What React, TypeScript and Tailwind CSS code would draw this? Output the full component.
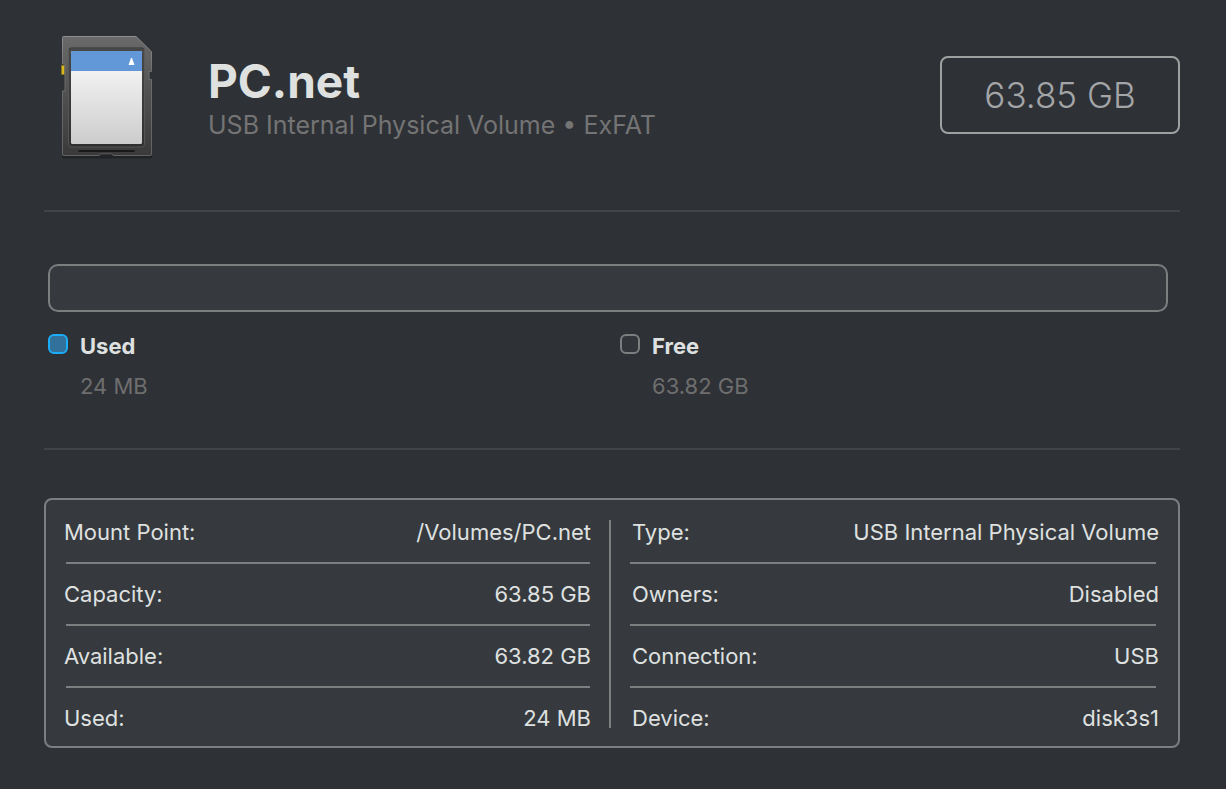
type Entry = { label: string; value: string };

const volumeDetails: Entry[] = [
  { label: "Mount Point:", value: "/Volumes/PC.net" },
  { label: "Capacity:", value: "63.85 GB" },
  { label: "Available:", value: "63.82 GB" },
  { label: "Used:", value: "24 MB" },
];

const deviceDetails: Entry[] = [
  { label: "Type:", value: "USB Internal Physical Volume" },
  { label: "Owners:", value: "Disabled" },
  { label: "Connection:", value: "USB" },
  { label: "Device:", value: "disk3s1" },
];

function SdCardIcon() {
  return (
    <svg viewBox="10 9 94 126" className="h-[126px] w-[94px] shrink-0" aria-hidden="true">
      <defs>
        <linearGradient id="body" x1="0" y1="0" x2="0" y2="1">
          <stop offset="0" stopColor="#6a6a6a" />
          <stop offset="0.45" stopColor="#525252" />
          <stop offset="1" stopColor="#3a3a3a" />
        </linearGradient>
        <linearGradient id="edge" x1="0" y1="0" x2="0" y2="1">
          <stop offset="0" stopColor="#8f8f8f" />
          <stop offset="0.3" stopColor="#6d6d6d" />
          <stop offset="1" stopColor="#626262" />
        </linearGradient>
        <linearGradient id="frame" x1="0" y1="0" x2="0" y2="1">
          <stop offset="0" stopColor="#484848" />
          <stop offset="1" stopColor="#303030" />
        </linearGradient>
        <linearGradient id="label" x1="0" y1="0" x2="0" y2="1">
          <stop offset="0" stopColor="#f2f2f2" />
          <stop offset="0.25" stopColor="#f0f0f0" />
          <stop offset="1" stopColor="#cccccc" />
        </linearGradient>
      </defs>
      <path d="M12 131h90v1q0 1.500-1.500 1.500H13.500q-1.500 0-1.500-1.500z" fill="#1d1f21" opacity="0.7" />
      <rect x="11.5" y="40.5" width="3" height="9" fill="#d8b81c" stroke="#8d7a1c" strokeWidth="0.6" />
      <path
        d="M13.500 11.500H86l15.500 15.200V46.500H99V54.500h2.500V129q0 1.500-1.500 1.500H63.500l-1.500-1.500H50.500L49 130.500H14q-1.500 0-1.500-1.500V66h2.500V39h-2.500V12.500q0-1 1-1z"
        fill="url(#body)"
        stroke="url(#edge)"
        strokeWidth="1"
      />
      <rect x="18.500" y="23.500" width="76" height="98.500" rx="3" fill="url(#frame)" stroke="#5c5c5c" strokeWidth="0.8" />
      <path d="M19 25q0-2 2-2h71q2 0 2 2" fill="none" stroke="#333333" strokeWidth="1" />
      <rect x="21" y="26" width="71" height="93" rx="1.5" fill="url(#label)" />
      <path d="M21 46V27.500q0-1.500 1.500-1.500h68q1.500 0 1.500 1.500V46z" fill="#6298d8" />
      <path d="M81 33h1l2.500 7h-6z" fill="#ffffff" />
      <rect x="28.500" y="125" width="56" height="2" fill="#191919" />
      <path d="M50.500 130h11.500" stroke="#1c1c1c" strokeWidth="1" />
    </svg>
  );
}

function DetailList({ entries, className, ruleClassName }: { entries: Entry[]; className: string; ruleClassName: string }) {
  return (
    <dl className={className}>
      {entries.map((entry) => (
        <div
          key={entry.label}
          className={`group flex flex-wrap justify-between after:h-0.5 after:basis-full after:bg-[#7d7e7f] last:after:hidden ${ruleClassName}`}
        >
          <dt className="pt-4 pb-4 pl-0.5 group-last:pb-3.5">{entry.label}</dt>
          <dd className="pt-4 pb-4 text-right group-last:pb-3.5">{entry.value}</dd>
        </div>
      ))}
    </dl>
  );
}

function LegendItem({ name, amount, swatch }: { name: string; amount: string; swatch: string }) {
  return (
    <li className="flex gap-3">
      <span className={`h-5 w-5 shrink-0 rounded-md border-2 ${swatch}`} />
      <div className="text-[22px] leading-6">
        <h2 className="font-bold text-[#dfe1e0]">{name}</h2>
        <p className="mt-4 text-[#6e6e6e]">{amount}</p>
      </div>
    </li>
  );
}

export default function App() {
  return (
    <main className="min-h-screen bg-[#2e3136] pt-[34px] pr-[46px] pb-10 pl-11 font-['Inter',sans-serif]">
      <header className="flex items-start border-b-2 border-[#404347] pb-[50px] pl-4">
        <SdCardIcon />
        <div className="ml-[54px] flex-1 pt-5">
          <h1 className="text-[46px] leading-[54px] font-bold text-[#dfe1e0]">PC.net</h1>
          <p className="text-[25px] leading-[34px] text-[#747474]">USB Internal Physical Volume • ExFAT</p>
        </div>
        <p className="mt-[22px] flex h-[78px] w-60 items-center justify-center rounded-lg border-2 border-[#9fa1a1] text-[35px] font-light text-[#a3a5a7]">
          63.85 GB
        </p>
      </header>

      <section aria-label="Storage usage" className="border-b-2 border-[#404347] pt-[52px] pb-[50px] pl-1">
        <div className="mr-3 h-12 rounded-[10px] border-2 border-[#7d7e7f] bg-[#36393d]" />
        <ul className="mt-[22px] grid grid-cols-2 gap-3">
          <LegendItem name="Used" amount="24 MB" swatch="border-[#1badf8] bg-[#327199]" />
          <LegendItem name="Free" amount="63.82 GB" swatch="border-[#7d7e7f] bg-[#323539]" />
        </ul>
      </section>

      <section
        aria-label="Volume details"
        className="mt-12 grid grid-cols-[563fr_2px_567fr] rounded-lg border-2 border-[#7d7e7f] bg-[#36393d] pt-0.5 text-[22px] leading-7 text-[#dfe1e0]"
      >
        <DetailList entries={volumeDetails} className="pr-[18px] pl-4" ruleClassName="after:mr-px after:ml-1" />
        <div className="my-[18px] bg-[#7d7e7f]" />
        <DetailList entries={deviceDetails} className="px-[19px]" ruleClassName="after:mr-[3px]" />
      </section>
    </main>
  );
}
